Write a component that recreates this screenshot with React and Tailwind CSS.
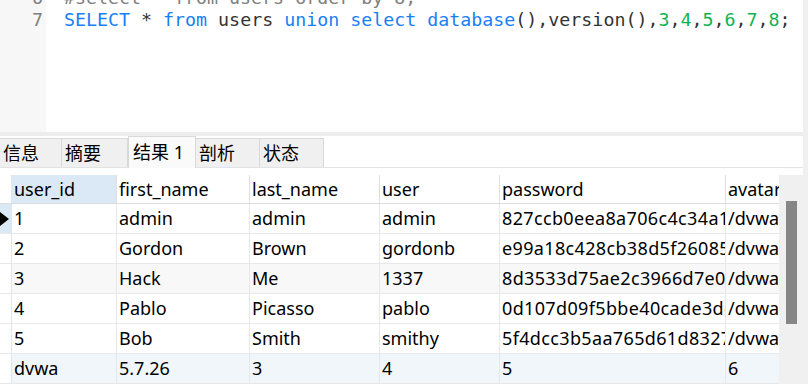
const cols = [
  { key: "user_id", w: "w-[105px]" },
  { key: "first_name", w: "w-[133px]" },
  { key: "last_name", w: "w-[130px]" },
  { key: "user", w: "w-[120px]" },
  { key: "password", w: "w-[226px]" },
  { key: "avatar", w: "w-[53px]" },
];

const rows = [
  ["1", "admin", "admin", "admin", "827ccb0eea8a706c4c34a16891f84e7b", "/dvwa/hackable/users/admin.jpg"],
  ["2", "Gordon", "Brown", "gordonb", "e99a18c428cb38d5f260853678922e03", "/dvwa/hackable/users/gordonb.jpg"],
  ["3", "Hack", "Me", "1337", "8d3533d75ae2c3966d7e0d4fcc69216b", "/dvwa/hackable/users/1337.jpg"],
  ["4", "Pablo", "Picasso", "pablo", "0d107d09f5bbe40cade3de5c71e9e9b7", "/dvwa/hackable/users/pablo.jpg"],
  ["5", "Bob", "Smith", "smithy", "5f4dcc3b5aa765d61d8327deb882cf99", "/dvwa/hackable/users/smithy.jpg"],
  ["dvwa", "5.7.26", "3", "4", "5", "6"],
];

const rowBg = ["bg-white", "bg-white", "bg-[#f8f8f8]", "bg-white", "bg-white", "bg-[#f1f6fb]"];

const tabs = [
  { label: "信息", w: "w-[62px]" },
  { label: "摘要", w: "w-[66px]" },
  { label: "结果 1", w: "w-[68px]", active: true },
  { label: "剖析", w: "w-[64px]" },
  { label: "状态", w: "w-[64px]" },
];

const Kw = ({ children }) => <span className="text-[#1a7ff5]">{children}</span>;
const Num = ({ children }) => <span className="text-[#10b350]">{children}</span>;

export default function App() {
  return (
    <div className="w-[808px] h-[384px] overflow-hidden bg-white flex flex-col font-['Noto_Sans','Noto_Sans_CJK_SC',sans-serif] text-black">
      {/* Top: editor + tabs */}
      <div className="flex h-[175px]">
        <div className="w-[803px] flex flex-col">
          {/* Editor */}
          <div className="h-[132px] flex overflow-hidden font-['DejaVu_Sans_Mono',monospace] text-[18.3px] leading-[22px]">
            <div className="w-[46px] bg-[#f7f7f7] flex flex-col items-end pr-[3px] text-[#808080] -mt-[13px]">
              <div>6</div>
              <div>7</div>
            </div>
            <div className="flex-1 pl-[18px] -mt-[13px] whitespace-pre text-[#333]">
              <div className="text-[#808080]">#select * from users order by 8;</div>
              <div>
                <Kw>SELECT</Kw> * <Kw>from</Kw> users <Kw>union</Kw> <Kw>select</Kw> <Kw>database</Kw>(),version(),
                <Num>3</Num>,<Num>4</Num>,<Num>5</Num>,<Num>6</Num>,<Num>7</Num>,<Num>8</Num>;
              </div>
            </div>
          </div>
          <div className="h-[4px] bg-[#ededed]" />
          {/* Tabs */}
          <div className="h-[32px] flex items-end border-b border-[#e3e3e3]">
            {tabs.map((t) =>
              t.active ? (
                <div
                  key={t.label}
                  className={`${t.w} h-[32px] -mb-px bg-[#fafafa] border-x border-t border-[#d9d9d9] flex items-center pl-[4px] text-[18px]`}
                >
                  {t.label}
                </div>
              ) : (
                <div
                  key={t.label}
                  className={`${t.w} h-[29px] bg-[#f0f0f0] border-r border-t border-[#d9d9d9] flex items-center pl-[3px] text-[18px]`}
                >
                  {t.label}
                </div>
              )
            )}
          </div>
          <div className="flex-1" />
        </div>
        <div className="w-[5px] bg-[#f0f0f0]" />
      </div>

      {/* Grid */}
      <div className="flex flex-1">
        <div className="w-[779px] flex flex-col text-[18px]">
          <div className="flex h-[29px] border-b border-[#dcdcdc]">
            <div className="w-[12px] border-r border-[#dde6ef]" />
            {cols.map((c, i) => (
              <div
                key={c.key}
                className={`${c.w} ${i === 0 ? "bg-[#dbe9f7]" : ""} ${i < 5 ? "border-r border-[#e0e0e0]" : ""} flex items-center pl-[2px] overflow-hidden whitespace-nowrap`}
              >
                {c.key}
              </div>
            ))}
          </div>
          {rows.map((r, ri) => (
            <div key={ri} className={`flex h-[30px] border-b border-[#e8e8e8] ${rowBg[ri]}`}>
              <div
                className={`w-[12px] border-r border-[#dde6ef] flex items-center ${ri === 0 ? "bg-[#dbe9f7]" : "bg-white"}`}
              >
                {ri === 0 && (
                  <svg width="10" height="14" viewBox="0 0 10 14">
                    <path d="M0 0 L9 7 L0 14 Z" fill="#000" />
                  </svg>
                )}
              </div>
              {r.map((v, ci) => (
                <div
                  key={ci}
                  className={`${cols[ci].w} ${ci < 5 ? "border-r border-[#e8e8e8]" : ""} flex items-center pl-[2px] overflow-hidden whitespace-nowrap ${ci === 4 ? "tracking-[0.35px]" : ""}`}
                >
                  {v}
                </div>
              ))}
            </div>
          ))}
        </div>
        <div className="flex-1 bg-[#f0f0f0] pl-[7px] pt-[26px]">
          <div className="w-[11px] h-[123px] bg-[#868686]" />
        </div>
      </div>
    </div>
  );
}
